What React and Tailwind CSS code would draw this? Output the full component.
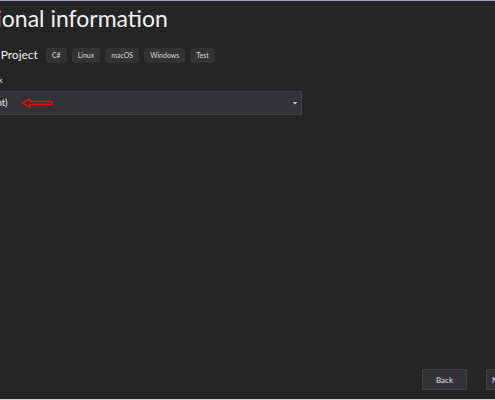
import React from 'react';

const tags = ['C#', 'Linux', 'macOS', 'Windows', 'Test'];

const App = () => {
  return (
    <main
      className="relative w-[495px] h-[400px] overflow-hidden bg-[#252526] text-[#f1f1f1] flex flex-col border-t border-b border-t-[#9aa3b3] border-b-[#cfcfcf]"
      style={{ fontFamily: 'Lato, "Open Sans", sans-serif' }}
    >
      <div className="overflow-hidden">
        <h1 className="text-[23px] leading-[32px] mt-[1px] -ml-[59px] whitespace-nowrap font-normal">
          Additional information
        </h1>
      </div>

      <div className="flex items-center mt-[13px] h-[16px]">
        <span className="text-[12px] -ml-[45px] mr-[8px] whitespace-nowrap">Console Project</span>
        <div className="flex gap-[5px]">
          {tags.map((t) => (
            <span
              key={t}
              className="h-[15px] px-[6px] rounded-[3px] bg-[#333333] text-[7px] leading-[15px] text-[#d8d8d8]"
            >
              {t}
            </span>
          ))}
        </div>
      </div>

      <div className="mt-[12px] text-[8px] leading-[10px] -ml-[37px] whitespace-nowrap">Framework</div>

      <div className="mt-[6px] w-[302px] h-[24px] bg-[#333337] border border-[#3f3f46] border-l-0 flex items-center">
        <span className="text-[9px] -ml-[64px] whitespace-nowrap">.NET 5.0 (Current)</span>
        <svg width="33" height="10" viewBox="0 0 33 10" className="ml-[14px]">
          <path
            d="M1 5 L9 1 L9 3.5 L31 3.5 L31 6.5 L9 6.5 L9 9 Z"
            fill="none"
            stroke="#e01010"
            strokeWidth="1.4"
            strokeLinejoin="round"
          />
        </svg>
        <div className="flex-1" />
        <svg width="6" height="4" viewBox="0 0 6 4" className="mr-[3px]">
          <path d="M0.5 1 L5.5 1 L3 3.5 Z" fill="#c8c8c8" />
        </svg>
      </div>

      <div className="flex-1" />

      <div className="flex justify-end gap-[19px] mb-[9px] -mr-[20px]">
        <button className="w-[45px] h-[21px] bg-[#333337] border border-[#3f3f46] text-[8px] text-[#e0e0e0]">
          Back
        </button>
        <button className="w-[29px] h-[21px] bg-[#333337] border border-[#3f3f46] text-[8px] text-[#e0e0e0]">
          Next
        </button>
      </div>
    </main>
  );
};

export default App;
